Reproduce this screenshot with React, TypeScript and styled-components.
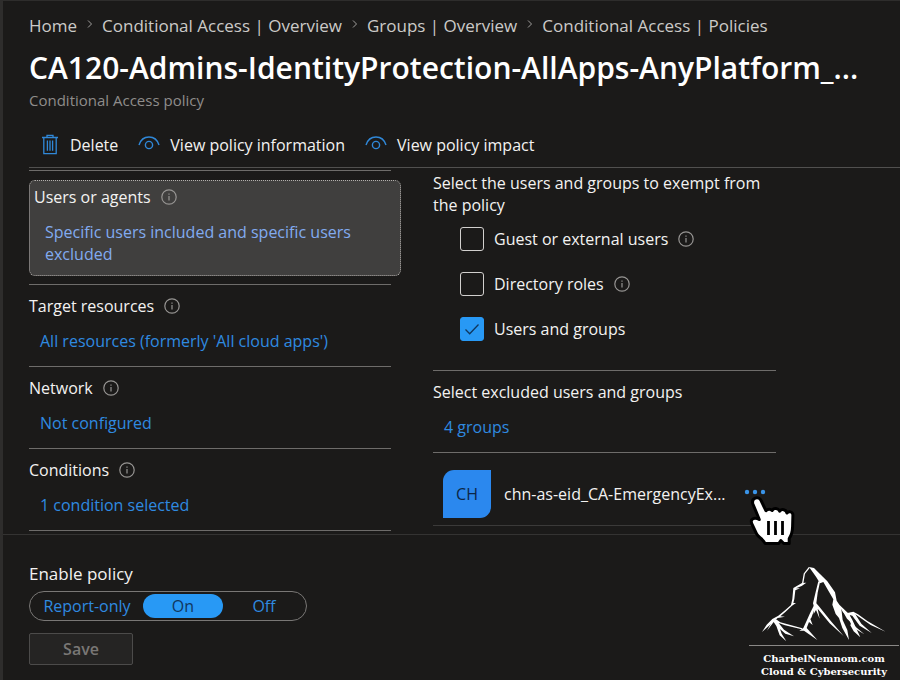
import React, { useState } from 'react';
import styled, { createGlobalStyle } from 'styled-components';

const GlobalStyle = createGlobalStyle`
  * { box-sizing: border-box; }
  body {
    margin: 0;
    background: #1b1a19;
    color: #f3f2f1;
    font-family: 'Open Sans', 'Noto Sans', sans-serif;
    font-size: 16px;
    line-height: 22px;
  }
  button, input { font: inherit; color: inherit; margin: 0; }
  h1, h2, h3, p, ol, ul { margin: 0; padding: 0; font: inherit; }
  a { text-decoration: none; }
  svg { display: block; flex: none; }
`;

const Page = styled.div`
  position: relative;
  display: flex;
  flex-direction: column;
  min-height: 100vh;
  border-left: 3px solid #2e2d2c;
  border-top: 1px solid #2e2d2c;
`;

const Header = styled.header`
  display: flex;
  flex-direction: column;
  padding: 14px 26px 0;
`;

const Breadcrumbs = styled.ol`
  display: flex;
  align-items: center;
  gap: 8px;
  font-size: 17px;
  list-style: none;
`;

const Crumb = styled.li`
  display: flex;
  align-items: center;
  gap: 8px;
  white-space: nowrap;
`;

const CrumbLink = styled.a`
  color: #cccac8;
`;

const Title = styled.h1`
  margin-top: 10px;
  font-size: 30px;
  line-height: 42px;
  font-weight: 600;
  color: #ffffff;
  white-space: nowrap;
`;

const Subtitle = styled.p`
  font-size: 15px;
  color: #8f8d8b;
`;

const Toolbar = styled.div`
  display: flex;
  align-items: center;
  gap: 20px;
  margin-left: 26px;
  padding: 23px 11px 11px;
  border-bottom: 1px solid #51504f;
`;

const ToolButton = styled.button`
  display: flex;
  align-items: center;
  gap: 10px;
  padding: 0;
  border: 0;
  background: none;
  color: #f3f2f1;
  white-space: nowrap;
  cursor: pointer;
`;

const Columns = styled.main`
  display: grid;
  grid-template-columns: minmax(0, 372fr) minmax(0, 343fr) minmax(0, 92fr);
  column-gap: 32px;
  padding: 2px 0 3px 26px;
`;

const Assignments = styled.div`
  display: flex;
  flex-direction: column;
`;

const Rule = styled.hr<{ $inset?: boolean; $dim?: boolean }>`
  width: ${(p) => (p.$inset ? 'calc(100% - 10px)' : '100%')};
  height: 1px;
  margin: 0;
  border: 0;
  background: ${(p) => (p.$dim ? '#3b3a39' : '#6e6c6a')};
`;

const Section = styled.section<{ $selected?: boolean }>`
  display: flex;
  flex-direction: column;
  gap: 13px;
  margin: ${(p) => (p.$selected ? '9px 0 8px' : '0')};
  padding: ${(p) => (p.$selected ? '5px 4px 10px' : '10px 0 14px')};
  border: ${(p) => (p.$selected ? '1px dotted #b3b0ad' : '0')};
  border-radius: 6px;
  background: ${(p) => (p.$selected ? '#403f3e' : 'transparent')};
`;

const SectionTitle = styled.h2`
  display: flex;
  align-items: center;
  gap: 10px;
  white-space: nowrap;
`;

const ValueLink = styled.a<{ $light?: boolean }>`
  padding: 0 40px 0 11px;
  color: ${(p) => (p.$light ? '#82abf0' : '#2f8ae0')};
`;

const Exclusions = styled.div`
  display: flex;
  flex-direction: column;
  padding-top: 2px;
`;

const Choices = styled.div`
  display: flex;
  flex-direction: column;
  gap: 21px;
  padding: 11px 0 29px 27px;
`;

const Choice = styled.div`
  display: flex;
  align-items: center;
  gap: 10px;
`;

const ChoiceLabel = styled.label`
  display: flex;
  align-items: center;
  gap: 10px;
  white-space: nowrap;
  cursor: pointer;
`;

const BoxWrap = styled.span`
  display: grid;
  width: 24px;
  height: 24px;
  & > * { grid-area: 1 / 1; place-self: center; }
`;

const Box = styled.input`
  appearance: none;
  width: 24px;
  height: 24px;
  border: 1px solid #d2d0ce;
  border-radius: 3px;
  &:checked { background: #2899f5; border-color: #2899f5; }
  & + svg { visibility: hidden; pointer-events: none; }
  &:checked + svg { visibility: visible; }
`;

const Member = styled.div`
  display: flex;
  align-items: center;
  gap: 13px;
  padding: 17px 10px 7px;
`;

const Avatar = styled.span`
  display: grid;
  place-items: center;
  flex: none;
  width: 48px;
  height: 48px;
  border-radius: 11px 0 11px 0;
  background: #2b88ee;
  color: #0c2747;
`;

const MemberName = styled.span`
  flex: 1;
  white-space: nowrap;
`;

const MoreButton = styled.button`
  position: relative;
  padding: 8px 0 12px;
  border: 0;
  background: none;
  cursor: pointer;
`;

const Pointer = styled.svg`
  position: absolute;
  left: 4px;
  top: 13px;
  z-index: 1;
`;

const Footer = styled.footer`
  display: flex;
  flex-direction: column;
  align-items: flex-start;
  flex: 1;
  padding: 28px 26px 15px;
  border-top: 1px solid #343332;
`;

const Toggle = styled.fieldset`
  display: flex;
  margin: 0;
  padding: 0;
  border: 0;
  min-width: 0;
`;

const ToggleLegend = styled.legend`
  padding: 0 0 6px;
  font-size: 17px;
`;

const TogglePill = styled.div`
  display: flex;
  gap: 1px;
  padding: 2px;
  border: 1px solid #797775;
  border-radius: 15px;
`;

const ToggleOption = styled.label<{ $wide?: boolean }>`
  display: grid;
  place-items: center;
  width: ${(p) => (p.$wide ? '110px' : '80px')};
  height: 24px;
  border-radius: 12px;
  color: #2f8ae0;
  cursor: pointer;
  &:has(input:checked) { background: #2899f5; color: #10375e; }
  & > * { grid-area: 1 / 1; }
`;

const ToggleInput = styled.input`
  appearance: none;
  width: 100%;
  height: 100%;
`;

const SaveButton = styled.button`
  margin-top: 12px;
  width: 104px;
  height: 32px;
  padding: 0;
  border: 1px solid #4c4b4a;
  border-radius: 2px;
  background: #252423;
  color: #797775;
  font-weight: 600;
`;

const Brand = styled.aside`
  position: absolute;
  right: 1px;
  bottom: 2px;
  width: 150px;
  font: bold 10px/13px 'DejaVu Serif', serif;
  text-align: center;
  white-space: nowrap;
  color: #ffffff;
`;

const BrandText = styled.p`
  padding-top: 6px;
  border-top: 1px solid #8a8886;
`;

const Chevron = () => (
  <svg width="9" height="14" viewBox="0 0 9 14" fill="none" stroke="#a19f9d" aria-hidden="true">
    <path d="M3 1.500l3.500 3.500L3 8.500" />
  </svg>
);

const InfoIcon = () => (
  <svg width="16" height="16" viewBox="0 0 16 16" fill="none" stroke="#979593" strokeWidth="1.2" role="img" aria-label="Info">
    <circle cx="8" cy="8" r="7.2" />
    <path d="M8 7v4.5M8 4.4v1.3" />
  </svg>
);

const TrashIcon = () => (
  <svg width="20" height="22" viewBox="0 0 20 22" fill="none" stroke="#3088d8" strokeWidth="1.3" aria-hidden="true">
    <path d="M2 3.500h16M7 3.500V1.300h6V3.500M3.800 3.500v16.200h12.4V3.500M7.4 6.500v10.2M10 6.500v10.2M12.6 6.500v10.2" />
  </svg>
);

const EyeIcon = () => (
  <svg width="22" height="20" viewBox="0 0 22 20" fill="none" stroke="#3088d8" strokeWidth="1.4" aria-hidden="true">
    <path d="M1 10C2.5 5.2 6.2 2 11 2S19.500 5.200 21 10" />
    <circle cx="11" cy="10" r="3.600" />
  </svg>
);

const CheckIcon = () => (
  <svg width="16" height="14" viewBox="0 0 16 14" fill="none" stroke="#10375e" strokeWidth="1.3" aria-hidden="true">
    <path d="M1.500 7.500l4.200 4.200L14.500 2.500" />
  </svg>
);

const Hand = () => (
  <Pointer width="48" height="54" viewBox="0 0 48 54" aria-hidden="true">
    <path
      d="M7.200 4.200C4.600 5.300 4 7.600 5 10.200l6.300 15.300c-2.800-2-6.300-1.700-7.600.4-1.200 1.900 0 3.600.9 5.600l4 8.300c1.500 3 4.800 4.500 6.900 7.300l1.700 2.400h13.600l2-3 3 3h5.400v-5c2.400-3.500 3.300-7.500 3.400-12l.3-11.500c0-3.400-4.300-4.300-6-2-.6-3.600-5.500-4.600-7.200-1.700-1.200-3.500-6.200-3.800-7.600-.8-1.300-1.700-4.300-2-6.200.2L13.300 7c-1.100-2.700-3.600-3.800-6.100-2.800z"
      fill="#ffffff" stroke="#000000" strokeWidth="3" strokeLinejoin="round"
    />
    <path d="M20.500 27v14M27.500 27v14M34.500 27v14" stroke="#000000" strokeWidth="2.800" />
  </Pointer>
);

const Mountain = () => (
  <svg width="150" height="80" viewBox="27 43 450 240" fill="#ffffff" aria-hidden="true">
    <path d="M207 49l15 3 18 18 22 22 23 33 5 25 8 12 25 24 13 20 15 32 10 22-20-18-10-18 3-8-13-12-17-30 4 34 14 30 5 30-20-36-10-30-10-12-10-28 3-16-14-24-16-28-10 4-12-20-16-22z" />
    <path d="M322 187l18-4 14 8 28 20 55 32-45-20-46-32 18 28 31 28-36-22-22-30-8-2 14 32 30 26-36-22-16-36-12-8-8-16z" />
    <path d="M235 92l5 2-7 32-4 32 9 10 35 44 38 44-42-38-36-44 6 30-11-26-7 12 1-22-3-10 8-34z" />
    <path d="M222 164l4 5-12 32-3 4 7 18-11-9-7 18 32 36-40-28-14 0 12-8 12-26 8-18z" />
    <path d="M107 205l14 10 66 18-2 3-50-12-19-7 16 20 30 20-26-8-16-14 5 14 14 23-20-18-10-28-8-12-20 26 12-22z" />
    <path d="M160 112l26-15 13-1-14 10-17 7 12 0-14 6-3 26-3 12 8 0-12 8-20 19-15 13 14 1-22 4-16 14-31 28 14-22 17-17 18-10 20-16 18-16 4-18z" />
    <path d="M208 50l-15 19-5 29" fill="none" stroke="#ffffff" strokeWidth="4" />
  </svg>
);

function SectionBlock({ title, value, selected }: { title: string; value: string; selected?: boolean }) {
  return (
    <Section $selected={selected}>
      <SectionTitle>{title}<InfoIcon /></SectionTitle>
      <ValueLink href="#" $light={selected}>{value}</ValueLink>
    </Section>
  );
}

function CheckRow({ label, info, initial = false }: { label: string; info?: boolean; initial?: boolean }) {
  const [on, setOn] = useState(initial);
  return (
    <Choice>
      <ChoiceLabel>
        <BoxWrap>
          <Box type="checkbox" checked={on} onChange={(e) => setOn(e.target.checked)} />
          <CheckIcon />
        </BoxWrap>
        {label}
      </ChoiceLabel>
      {info && <InfoIcon />}
    </Choice>
  );
}

const crumbs = ['Home', 'Conditional Access | Overview', 'Groups | Overview', 'Conditional Access | Policies'];
const states = ['Report-only', 'On', 'Off'];

export default function App() {
  const [state, setState] = useState('On');
  return (
    <>
      <GlobalStyle />
      <Page>
        <Header>
          <nav aria-label="Breadcrumb">
            <Breadcrumbs>
              {crumbs.map((c, i) => (
                <Crumb key={c}>
                  {i > 0 && <Chevron />}
                  <CrumbLink href="#">{c}</CrumbLink>
                </Crumb>
              ))}
            </Breadcrumbs>
          </nav>
          <Title>CA120-Admins-IdentityProtection-AllApps-AnyPlatform_...</Title>
          <Subtitle>Conditional Access policy</Subtitle>
        </Header>
        <Toolbar>
          <ToolButton type="button"><TrashIcon />Delete</ToolButton>
          <ToolButton type="button"><EyeIcon />View policy information</ToolButton>
          <ToolButton type="button"><EyeIcon />View policy impact</ToolButton>
        </Toolbar>
        <Columns>
          <Assignments>
            <Rule $inset />
            <SectionBlock title="Users or agents" value="Specific users included and specific users excluded" selected />
            <Rule $inset />
            <SectionBlock title="Target resources" value="All resources (formerly 'All cloud apps')" />
            <Rule $inset />
            <SectionBlock title="Network" value="Not configured" />
            <Rule $inset />
            <SectionBlock title="Conditions" value="1 condition selected" />
            <Rule $inset />
          </Assignments>
          <Exclusions>
            <p>Select the users and groups to exempt from the policy</p>
            <Choices>
              <CheckRow label="Guest or external users" info />
              <CheckRow label="Directory roles" info />
              <CheckRow label="Users and groups" initial />
            </Choices>
            <Rule />
            <Section>
              <SectionTitle>Select excluded users and groups</SectionTitle>
              <ValueLink href="#">4 groups</ValueLink>
            </Section>
            <Rule />
            <Member>
              <Avatar>CH</Avatar>
              <MemberName>chn-as-eid_CA-EmergencyEx...</MemberName>
              <MoreButton type="button" aria-label="More options">
                <svg width="22" height="6" viewBox="0 0 22 6" fill="#3a94e8" aria-hidden="true">
                  <circle cx="3" cy="3" r="2.200" />
                  <circle cx="11" cy="3" r="2.200" />
                  <circle cx="19" cy="3" r="2.200" />
                </svg>
                <Hand />
              </MoreButton>
            </Member>
            <Rule $dim />
          </Exclusions>
        </Columns>
        <Footer>
          <Toggle>
            <ToggleLegend>Enable policy</ToggleLegend>
            <TogglePill>
              {states.map((s, i) => (
                <ToggleOption key={s} $wide={i === 0}>
                  <ToggleInput type="radio" name="policy-state" checked={state === s} onChange={() => setState(s)} />
                  <span>{s}</span>
                </ToggleOption>
              ))}
            </TogglePill>
          </Toggle>
          <SaveButton type="button" disabled>Save</SaveButton>
        </Footer>
        <Brand>
          <Mountain />
          <BrandText>CharbelNemnom.com<br />Cloud &amp; Cybersecurity</BrandText>
        </Brand>
      </Page>
    </>
  );
}
